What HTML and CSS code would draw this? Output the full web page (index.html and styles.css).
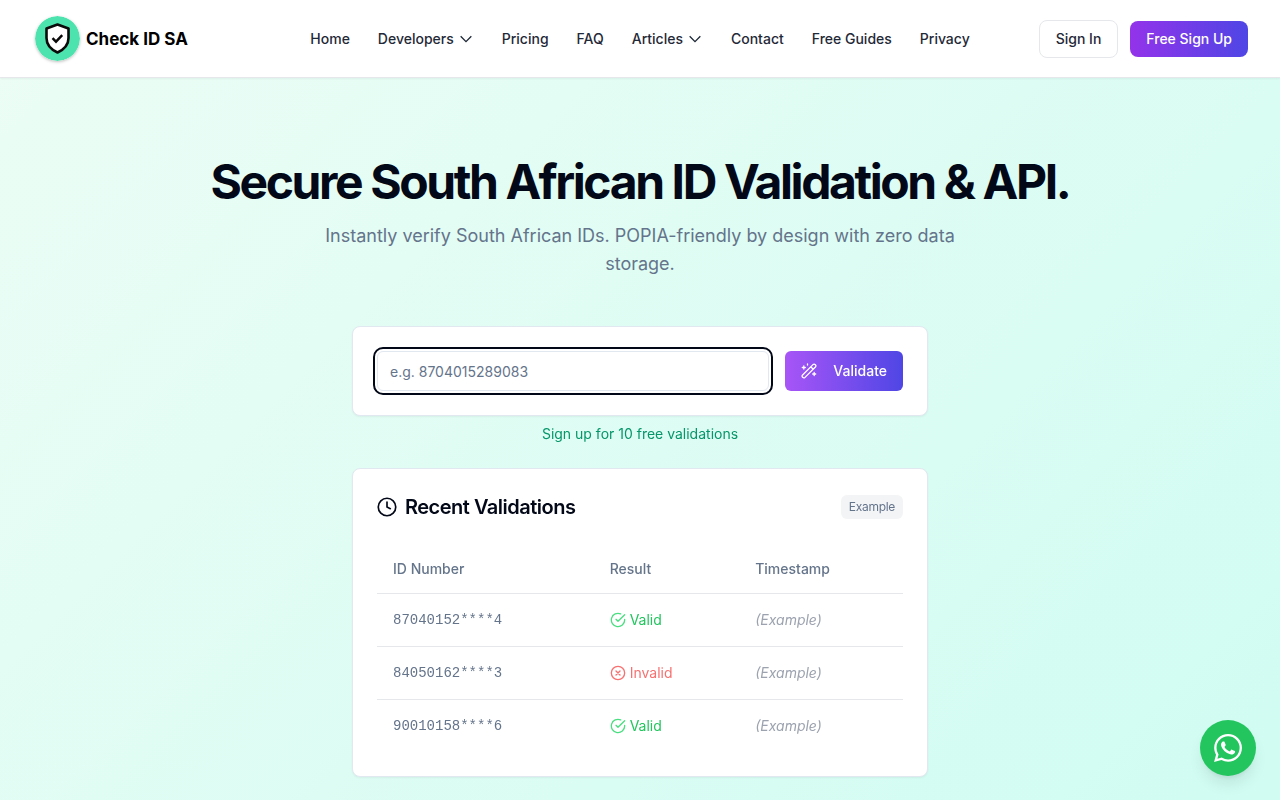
FILE: index.html
```
<!DOCTYPE html>
<html lang="en">

<head>
    <meta charset="UTF-8">
    <title>Check ID SA</title>
    <meta name="viewport" content="width=device-width, initial-scale=1.0">
    <link rel="stylesheet" href="styles.css">
</head>

<body>
    <header class="header">
        <a href="#" class="logo">
            <svg class="logo-mark" viewBox="0 0 45 45" aria-hidden="true">
                <circle cx="22.500" cy="22.500" r="22.500" fill="#4de3ae" />
                <path d="M22.500 8.500 33.500 12.500V22c0 7-4.500 11.500-11 14.500C16 33.500 11.500 29 11.500 22V12.500z" fill="#fff" stroke="#0a0a0a" stroke-width="2.600" stroke-linejoin="round" />
                <path d="m17.500 22.200 3.500 3.500 6.200-6.500" fill="none" stroke="#0a0a0a" stroke-width="2.400" />
            </svg>
            <span>Check ID SA</span>
        </a>
        <nav class="nav">
            <a href="#">Home</a>
            <button type="button">Developers
                <svg class="chevron" viewBox="0 0 24 24" aria-hidden="true"><path d="m4 8 8 8 8-8" /></svg>
            </button>
            <a href="#">Pricing</a>
            <a href="#">FAQ</a>
            <button type="button">Articles
                <svg class="chevron" viewBox="0 0 24 24" aria-hidden="true"><path d="m4 8 8 8 8-8" /></svg>
            </button>
            <a href="#">Contact</a>
            <a href="#">Free Guides</a>
            <a href="#">Privacy</a>
        </nav>
        <div class="actions">
            <a href="#" class="btn btn-outline">Sign In</a>
            <a href="#" class="btn btn-primary">Free Sign Up</a>
        </div>
    </header>

    <main class="hero">
        <h1>Secure South African ID Validation &amp; API.</h1>
        <p class="lead">Instantly verify South African IDs. POPIA-friendly by design with zero data storage.</p>

        <div class="content">
            <form class="card form">
                <input type="text" class="id-input" placeholder="e.g. 8704015289083" aria-label="South African ID number" autofocus>
                <button type="button" class="validate">
                    <svg viewBox="0 0 16 16" aria-hidden="true">
                        <g fill="none" stroke="currentColor" stroke-width="1.300" stroke-linecap="round" stroke-linejoin="round">
                            <path d="M1.600 12 12 1.600a1.700 1.700 0 0 1 2.400 2.400L4 14.400A1.700 1.700 0 0 1 1.600 12zM9.800 3.800l2.400 2.400" />
                            <path d="M2.800 3v3M1.300 4.500h3M6.500 1v1M13.200 9.500v3M11.700 11h3" />
                        </g>
                    </svg>
                    <span>Validate</span>
                </button>
            </form>
            <a href="#" class="signup-link">Sign up for 10 free validations</a>

            <section class="card recent">
                <div class="recent-header">
                    <h2>
                        <svg viewBox="0 0 24 24" aria-hidden="true"><circle cx="12" cy="12" r="10.500" /><path d="M12 6v6l4 2" /></svg>
                        Recent Validations
                    </h2>
                    <span class="badge">Example</span>
                </div>
                <table>
                    <thead>
                        <tr>
                            <th>ID Number</th>
                            <th>Result</th>
                            <th>Timestamp</th>
                        </tr>
                    </thead>
                    <tbody>
                        <tr>
                            <td class="number">87040152****4</td>
                            <td><span class="result valid"><svg viewBox="0 0 24 24" aria-hidden="true"><path d="M22 11.080V12a10 10 0 1 1-5.930-9.140" /><path d="m9 11 3 3L22 4" /></svg>Valid</span></td>
                            <td class="time">(Example)</td>
                        </tr>
                        <tr>
                            <td class="number">84050162****3</td>
                            <td><span class="result invalid"><svg viewBox="0 0 24 24" aria-hidden="true"><circle cx="12" cy="12" r="10" /><path d="m15 9-6 6M9 9l6 6" /></svg>Invalid</span></td>
                            <td class="time">(Example)</td>
                        </tr>
                        <tr>
                            <td class="number">90010158****6</td>
                            <td><span class="result valid"><svg viewBox="0 0 24 24" aria-hidden="true"><path d="M22 11.080V12a10 10 0 1 1-5.930-9.140" /><path d="m9 11 3 3L22 4" /></svg>Valid</span></td>
                            <td class="time">(Example)</td>
                        </tr>
                    </tbody>
                </table>
            </section>
        </div>
    </main>

    <a href="#" class="whatsapp" aria-label="Chat on WhatsApp">
        <svg viewBox="0 0 24 24" aria-hidden="true">
            <path d="M17.472 14.382c-.297-.149-1.758-.867-2.030-.967-.273-.099-.471-.148-.670.150-.197.297-.767.966-.940 1.164-.173.199-.347.223-.644.075-.297-.150-1.255-.463-2.390-1.475-.883-.788-1.480-1.761-1.653-2.059-.173-.297-.018-.458.130-.606.134-.133.298-.347.446-.520.149-.174.198-.298.298-.497.099-.198.050-.371-.025-.520-.075-.149-.669-1.612-.916-2.207-.242-.579-.487-.500-.669-.510-.173-.008-.371-.010-.570-.010-.198 0-.520.074-.792.372-.272.297-1.040 1.016-1.040 2.479 0 1.462 1.065 2.875 1.213 3.074.149.198 2.096 3.200 5.077 4.487.709.306 1.262.489 1.694.625.712.227 1.360.195 1.871.118.571-.085 1.758-.719 2.006-1.413.248-.694.248-1.289.173-1.413-.074-.124-.272-.198-.570-.347m-5.421 7.403h-.004a9.870 9.870 0 0 1-5.031-1.378l-.361-.214-3.741.982.998-3.648-.235-.374a9.860 9.860 0 0 1-1.510-5.260c.001-5.450 4.436-9.884 9.888-9.884 2.640 0 5.122 1.030 6.988 2.898a9.825 9.825 0 0 1 2.893 6.994c-.003 5.450-4.437 9.884-9.885 9.884m8.413-18.297A11.815 11.815 0 0 0 12.050 0C5.495 0 .160 5.335.157 11.892c0 2.096.547 4.142 1.588 5.945L.057 24l6.305-1.654a11.882 11.882 0 0 0 5.683 1.448h.005c6.554 0 11.890-5.335 11.893-11.893a11.821 11.821 0 0 0-3.480-8.413z" />
        </svg>
    </a>
</body>

</html>
```
FILE: styles.css
```
* {
    box-sizing: border-box;
}

body {
    margin: 0;
    min-height: 100vh;
    font-family: Inter, "Liberation Sans", sans-serif;
    font-size: 14px;
    line-height: 20px;
    color: #020817;
    background: linear-gradient(135deg, #ecfdf5, #d0fcf2);
}

a {
    color: inherit;
    text-decoration: none;
}

button {
    font: inherit;
    color: inherit;
    border: none;
    background: none;
    padding: 0;
    cursor: pointer;
}

/* Header */
.header {
    display: grid;
    grid-template-columns: 1fr auto 1fr;
    align-items: center;
    height: 78px;
    padding: 0 32px;
    background-color: white;
    border-bottom: 1px solid #e5e7eb;
    box-shadow: 0 1px 2px rgba(0, 0, 0, 0.05);
}

.logo {
    display: flex;
    align-items: center;
    gap: 6px;
    padding-left: 3px;
    font-size: 17px;
    font-weight: 700;
    color: black;
}

.logo-mark {
    width: 45px;
    height: 45px;
    border-radius: 50%;
    box-shadow: 0 1px 3px rgba(0, 0, 0, 0.25);
}

.nav {
    display: flex;
    align-items: center;
    gap: 28px;
    font-weight: 500;
    color: #1f2937;
}

.nav button {
    display: flex;
    align-items: center;
    gap: 4px;
    font-weight: 500;
}

.chevron {
    width: 16px;
    height: 16px;
    fill: none;
    stroke: currentColor;
    stroke-width: 2;
}

.actions {
    display: flex;
    align-items: center;
    justify-content: flex-end;
    gap: 12px;
}

.btn {
    padding: 8px 16px;
    border-radius: 8px;
    font-weight: 500;
}

.btn-outline {
    color: #1f2937;
    border: 1px solid #e5e7eb;
}

.btn-primary {
    color: white;
    background: linear-gradient(to right, #9333ea, #4f46e5);
}

/* Hero */
.hero {
    padding: 80px 24px 24px;
    text-align: center;
}

h1 {
    margin: 0;
    font-size: 48px;
    line-height: 48px;
    font-weight: 700;
    letter-spacing: -0.05em;
}

.lead {
    max-width: 672px;
    margin: 16px auto 0;
    font-size: 18px;
    line-height: 28px;
    color: #64748b;
}

.content {
    max-width: 576px;
    margin: 48px auto 0;
}

.card {
    background-color: white;
    border: 1px solid #e2e8f0;
    border-radius: 8px;
    box-shadow: 0 1px 2px rgba(0, 0, 0, 0.05);
    padding: 24px;
}

.form {
    display: flex;
    gap: 16px;
}

.id-input {
    flex: 1;
    min-width: 0;
    height: 40px;
    padding: 8px 12px;
    font: inherit;
    color: inherit;
    background-color: white;
    border: 1px solid #e2e8f0;
    border-radius: 6px;
    outline: 2px solid #020817;
    outline-offset: 2px;
}

.id-input::placeholder {
    color: #64748b;
}

.validate {
    display: flex;
    align-items: center;
    gap: 16px;
    height: 40px;
    padding: 0 16px;
    border-radius: 6px;
    font-weight: 500;
    color: white;
    background: linear-gradient(to right, #a855f7, #4f46e5);
}

.validate svg {
    width: 16px;
    height: 16px;
}

.signup-link {
    display: block;
    margin: 8px 0 24px;
    color: #059669;
}

/* Recent validations */
.recent {
    text-align: left;
}

.recent-header {
    display: flex;
    align-items: center;
    justify-content: space-between;
    margin-bottom: 24px;
}

h2 {
    display: flex;
    align-items: center;
    gap: 8px;
    margin: 0;
    font-size: 20px;
    line-height: 28px;
    font-weight: 600;
    letter-spacing: -0.025em;
}

h2 svg {
    width: 20px;
    height: 20px;
    fill: none;
    stroke: currentColor;
    stroke-width: 2;
    stroke-linecap: round;
}

.badge {
    padding: 4px 8px;
    border-radius: 6px;
    font-size: 12px;
    line-height: 16px;
    letter-spacing: -0.025em;
    color: #64748b;
    background-color: #f3f4f6;
}

table {
    width: 100%;
    border-collapse: collapse;
}

th {
    height: 48px;
    padding: 0 16px;
    text-align: left;
    font-weight: 500;
    color: #64748b;
}

td {
    padding: 16px;
}

tbody tr {
    border-top: 1px solid #e5e7eb;
}

.number {
    font-family: "Liberation Mono", monospace;
    color: #64748b;
}

.result {
    display: flex;
    align-items: center;
    gap: 4px;
}

.result svg {
    width: 16px;
    height: 16px;
    fill: none;
    stroke: currentColor;
    stroke-width: 2;
    stroke-linecap: round;
    stroke-linejoin: round;
}

.valid {
    color: #22c55e;
}

.valid svg {
    color: #4ade80;
}

.invalid {
    color: #f87171;
}

.time {
    font-style: italic;
    color: #9ca3af;
}

/* Floating chat button */
.whatsapp {
    position: fixed;
    right: 24px;
    bottom: 24px;
    display: flex;
    align-items: center;
    justify-content: center;
    width: 56px;
    height: 56px;
    border-radius: 50%;
    background-color: #22c55e;
    box-shadow: 0 10px 15px -3px rgba(0, 0, 0, 0.1), 0 4px 6px -4px rgba(0, 0, 0, 0.1);
}

.whatsapp svg {
    width: 28px;
    height: 28px;
    fill: white;
}
```
